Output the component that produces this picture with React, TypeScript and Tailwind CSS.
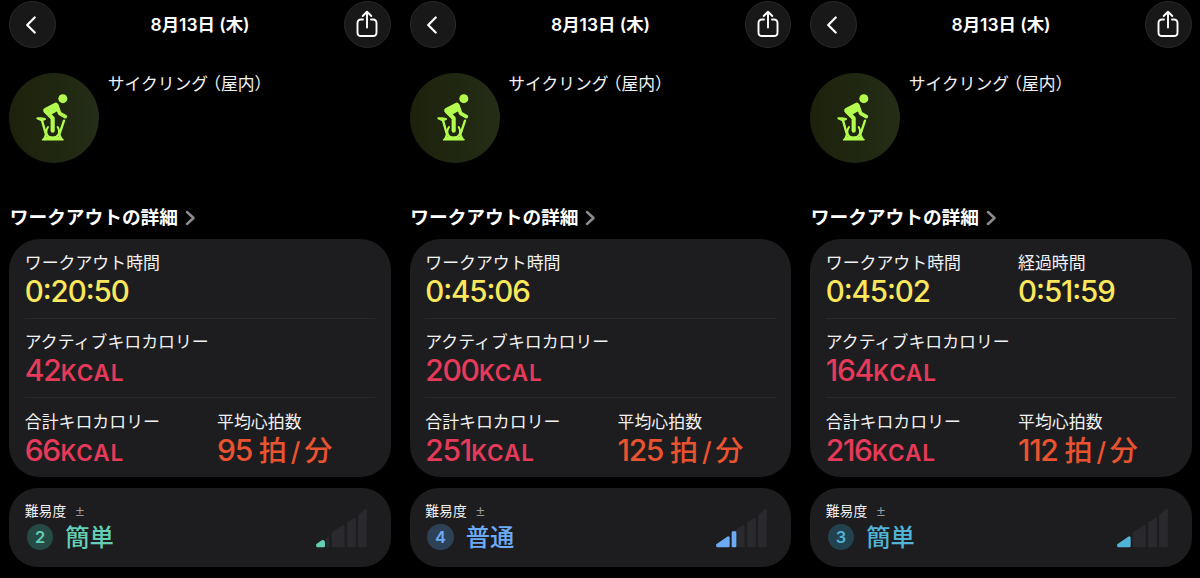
import React from 'react';
import { clsx } from 'clsx';

type Tone = 'mint' | 'sky' | 'blue';

interface Workout {
    time: string;
    elapsed?: string;
    active: string;
    total: string;
    heartRate: string;
    effort: { level: number; label: string; tone: Tone };
}

const workouts: Workout[] = [
    {
        time: '0:20:50',
        active: '42',
        total: '66',
        heartRate: '95',
        effort: { level: 2, label: '簡単', tone: 'mint' }
    },
    {
        time: '0:45:06',
        active: '200',
        total: '251',
        heartRate: '125',
        effort: { level: 4, label: '普通', tone: 'blue' }
    },
    {
        time: '0:45:02',
        elapsed: '0:51:59',
        active: '164',
        total: '216',
        heartRate: '112',
        effort: { level: 3, label: '簡単', tone: 'sky' }
    }
];

const toneText: Record<Tone, string> = {
    mint: 'text-[#64cfb4]',
    sky: 'text-[#50b4d7]',
    blue: 'text-[#6cabf7]'
};

const toneBadge: Record<Tone, string> = {
    mint: 'bg-[#264b46]',
    sky: 'bg-[#22424f]',
    blue: 'bg-[#2d4157]'
};

// filled part of the effort chart, one path list per level
const effortFill: Record<number, string[]> = {
    2: ['M52 134 L66 124 Q71 121 71 127 V137 H53 Z'],
    3: ['M52 134 L85 112 V137 H53 Z'],
    4: ['M52 134 L85 112 V137 H53 Z', 'M99 97 H105 V137 H99 Z']
};

const IndoorCycle: React.FC = () => (
    <svg viewBox="27 219 270 270" className="size-full" fill="none" stroke="#b4fb50" strokeLinecap="round" strokeLinejoin="round">
        <circle cx="188.5" cy="296" r="13.5" fill="#b4fb50" stroke="none" />
        {/* bike */}
        <path d="M112 355 L124 355 L135 357 L125 361 Z" fill="#b4fb50" strokeWidth="6" />
        <path d="M126 361 L138 404 L133 417 M192 362 L178 404 L184 417" strokeWidth="7" />
        <path d="M144 381 C133 398 142 413 158 413 C174 413 183 398 173 381" strokeWidth="6" />
        <path d="M128 419 L141 412 H175 L189 419 Z" fill="#b4fb50" strokeWidth="5" />
        {/* torso and leg */}
        <path d="M137 334 L158 355 V392" strokeWidth="12.5" />
        <path d="M167 316 L138 331" strokeWidth="16" />
        <path d="M171 317 L141 333 L150 342 L170 331 Z" fill="#b4fb50" strokeWidth="7" />
        {/* arm */}
        <path d="M171 318 L179 340 L196 350" strokeWidth="11" />
    </svg>
);

const EffortChart: React.FC<{ level: number }> = ({ level }) => (
    <svg viewBox="48 20 156 124" className="h-[41.33px] w-[52px]" strokeLinejoin="round">
        <g fill="#2a2a2e" stroke="#2a2a2e" strokeWidth="5">
            {level === 2 && <path d="M81 115 L84.5 112 V138 H81 Z" />}
            <path d="M98 97 L131 76 V138 H98 Z" />
            <path d="M144 68 L165 54 V138 H144 Z" />
            <path d="M177 46 L198 28 V138 H177 Z" />
        </g>
        <g fill="currentColor" stroke="currentColor" strokeWidth="8">
            {effortFill[level].map((d) => (
                <path key={d} d={d} />
            ))}
        </g>
    </svg>
);

const Metric: React.FC<{ label: string; className: string; children: React.ReactNode }> = ({ label, className, children }) => (
    <div className="w-[192.3px] shrink-0 whitespace-nowrap">
        <div className="h-[22px] text-[16.9px] leading-[22px] text-[#f2f2f4]">{label}</div>
        <div className={clsx('flex h-[36px] items-baseline text-[30px] leading-[34px] font-medium tracking-[-0.045em]', className)}>
            {children}
        </div>
    </div>
);

const Time: React.FC<{ value: string }> = ({ value }) => (
    <span className="text-[29.5px] tracking-[-0.037em] [font-feature-settings:'case']">{value}</span>
);

const Kcal: React.FC<{ value: string }> = ({ value }) => (
    <>
        <span>{value}</span>
        <span className="ml-[0.5px] text-[22.5px] font-semibold tracking-[0.04em]">KCAL</span>
    </>
);

const WorkoutPanel: React.FC<{ workout: Workout }> = ({ workout }) => {
    const { effort } = workout;

    return (
        <section className="w-[381.5px] shrink-0">
            <header className="mt-px flex h-[47px] items-center justify-between">
                <button className="flex size-[46.5px] items-center justify-center rounded-full border border-[#29292a] bg-[#181819]">
                    <svg viewBox="0 0 12 18" className="mr-[3px] h-[18px] w-[12px]" fill="none" stroke="#fff" strokeWidth="2.2" strokeLinecap="round" strokeLinejoin="round">
                        <path d="M9.7 1.5 L2.2 9 L9.7 16.5" />
                    </svg>
                </button>
                <h1 className="pt-[2px] text-[17.4px] font-semibold whitespace-nowrap text-white">8月13日 (木)</h1>
                <button className="flex size-[46.5px] items-center justify-center rounded-full border border-[#29292a] bg-[#181819]">
                    <svg viewBox="0 0 22 28" className="mr-px mb-px h-[28px] w-[22px]" fill="none" stroke="#fff" strokeWidth="1.9" strokeLinecap="round" strokeLinejoin="round">
                        <path d="M7 9.5 H5 Q1.5 9.5 1.5 13 V22.5 Q1.5 26 5 26 H17 Q20.5 26 20.5 22.5 V13 Q20.5 9.5 17 9.5 H15" />
                        <path d="M11 17.5 V2 M6.7 6 L11 1.8 L15.3 6" />
                    </svg>
                </button>
            </header>

            <div className="mt-[25px] flex h-[90px] gap-[8.5px]">
                <div className="size-[90px] shrink-0 rounded-full bg-linear-to-r from-[#1c210b] to-[#242d17]">
                    <IndoorCycle />
                </div>
                <p className="h-[22px] text-[16.8px] leading-[22px] whitespace-nowrap text-[#f2f2f4]">
                    サイクリング<span className="-ml-[4px]">（屋内</span><span>）</span>
                </p>
            </div>

            <h2 className="mt-[42px] flex h-[26px] items-center gap-[7px] pl-[0.5px] text-[18.7px] leading-[26px] font-bold whitespace-nowrap text-white">
                ワークアウトの詳細
                <svg viewBox="0 0 10 16" className="mb-px h-[16px] w-[10px]" fill="none" stroke="#8b8b90" strokeWidth="2.5" strokeLinecap="round" strokeLinejoin="round">
                    <path d="M2 2 L8.5 8 L2 14" />
                </svg>
            </h2>

            {/* Details card */}
            <div className="mt-[8px] h-[238px] rounded-[31px] bg-[#1d1d1f] px-[15.5px]">
                <div className="flex h-[80px] border-b border-[#29292b] pt-[13px]">
                    <Metric label="ワークアウト時間" className="text-[#fbe75c]">
                        <Time value={workout.time} />
                    </Metric>
                    {workout.elapsed && (
                        <Metric label="経過時間" className="text-[#fbe75c]">
                            <Time value={workout.elapsed} />
                        </Metric>
                    )}
                </div>
                <div className="flex h-[79px] border-b border-[#29292b] pt-[12px]">
                    <Metric label="アクティブキロカロリー" className="text-[#e53a59]">
                        <Kcal value={workout.active} />
                    </Metric>
                </div>
                <div className="flex h-[79px] pt-[12.5px]">
                    <Metric label="合計キロカロリー" className="text-[#e53a59]">
                        <Kcal value={workout.total} />
                    </Metric>
                    <Metric label="平均心拍数" className="text-[#ea5330]">
                        <span>{workout.heartRate}</span>
                        <span className="ml-[7px] text-[28px] tracking-normal">拍</span>
                        <span className="ml-[4px] text-[26px]">/</span>
                        <span className="ml-[5px] text-[28px] tracking-normal">分</span>
                    </Metric>
                </div>
            </div>

            {/* Effort card */}
            <div className={clsx('mt-[11px] flex h-[79px] justify-between rounded-[29px] bg-[#1d1d1f] pr-[23px] pl-[15.5px]', toneText[effort.tone])}>
                <div className="pt-[13px]">
                    <div className="flex h-[20px] items-center gap-[9.5px] text-[13.8px] leading-[20px] text-[#f2f2f4]">
                        難易度
                        <span className="font-['Liberation_Sans',sans-serif] text-[15px] text-[#98989d]">±</span>
                    </div>
                    <div className="flex h-[32px] items-center">
                        <span className={clsx('ml-[2px] flex size-[26.5px] items-center justify-center rounded-full text-[16.5px] font-semibold', toneBadge[effort.tone])}>
                            {effort.level}
                        </span>
                        <span className="ml-[12px] text-[24.3px] leading-[32px] font-medium">{effort.label}</span>
                    </div>
                </div>
                <div className="pt-[19px]">
                    <EffortChart level={effort.level} />
                </div>
            </div>
        </section>
    );
};

const App: React.FC = () => {
    return (
        <main className="flex h-[578px] w-[1200px] gap-[19px] overflow-hidden bg-black pl-[9.3px] font-['Inter','Noto_Sans_CJK_JP',sans-serif]">
            {workouts.map((workout) => (
                <WorkoutPanel key={workout.time} workout={workout} />
            ))}
        </main>
    );
};

export default App;
